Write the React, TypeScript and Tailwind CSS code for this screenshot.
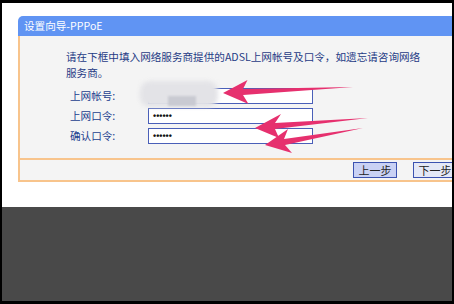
const font = { fontFamily: '"Noto Sans CJK SC", "Noto Sans", sans-serif' };

function Field({ label, value }: { label: string; value?: string }) {
  return (
    <div className="flex h-[20px] items-center">
      <div className="w-[82px] pl-[4px] text-[10.6px] text-[#23408f]">{label}</div>
      <div className="flex h-[16px] w-[165px] items-center border border-[#4a5fb8] bg-white pl-[4px] font-['Liberation_Sans',sans-serif] text-[9px] font-bold leading-none text-[#111]">
        {value}
      </div>
    </div>
  );
}

function StepButton({ label, light }: { label: string; light?: boolean }) {
  return (
    <button
      type="button"
      className={`flex h-[16px] w-[44px] items-center justify-center whitespace-nowrap border border-[#3b52b0] text-[11px] leading-none text-[#222] ${
        light ? "bg-[#e4e8f6]" : "bg-[#c9d1f4]"
      }`}
    >
      {label}
    </button>
  );
}

export default function App() {
  return (
    <div
      className="relative flex h-[304px] w-[454px] flex-col bg-black px-[2px] pt-[3px] pb-[3px]"
      style={font}
    >
      {/* screenshot of the router page */}
      <div className="h-[204px] overflow-hidden bg-white pl-[16px] pt-[13px]">
        <div className="w-[450px]">
          <div className="flex h-[20px] items-center rounded-tl-[5px] bg-[#6094f3] pl-[6px] text-[10.6px] text-white">
            设置向导-PPPoE
          </div>
          <div className="border-l-2 border-[#f8c48c] bg-[#f4f4f4]">
            <div className="h-[122px] pl-[46px] pt-[13px]">
              <p className="whitespace-nowrap text-[10.6px] leading-[16px] text-[#1f3b85]">
                请在下框中填入网络服务商提供的ADSL上网帐号及口令，如遗忘请咨询网络
                <br />
                服务商。
              </p>
              <div className="mt-[5px] flex flex-col">
                <Field label="上网帐号:" />
                <Field label="上网口令:" value="••••••" />
                <Field label="确认口令:" value="••••••" />
              </div>
            </div>
            <div className="flex h-[24px] items-center gap-[16px] border-y-2 border-[#f8c48c] pl-[333px]">
              <StepButton label="上一步" />
              <StepButton label="下一步" light />
            </div>
          </div>
        </div>
      </div>
      <div className="flex-1 bg-[#494949]" />

      {/* blurred-out account name */}
      <div className="absolute left-[140px] top-[81px] h-[26px] w-[78px] rounded-[10px] bg-[#e3e3e7] blur-[2px]" />
      <div className="absolute left-[168px] top-[96px] h-[10px] w-[28px] bg-[#c9cad2] blur-[1px]" />

      {/* annotation arrows */}
      <svg className="pointer-events-none absolute inset-0" width="454" height="304" viewBox="0 0 454 304">
        <g fill="#e6306e">
          <polygon points="223,93 247.5,80 243,89 353,87 243,95 248.5,104" />
          <polygon points="255,128 281,114 275,123 368,118 275,129 279,138" />
          <polygon points="265,145 288,129 284,139 363,128 285,145 292,153" />
        </g>
      </svg>
    </div>
  );
}
